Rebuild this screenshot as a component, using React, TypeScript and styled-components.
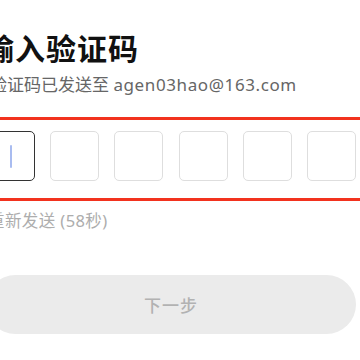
import styled, { createGlobalStyle } from "styled-components";

const GlobalStyle = createGlobalStyle`
  html, body {
    margin: 0;
    padding: 0;
    background: #ffffff;
    overflow: hidden;
  }
  body {
    width: 360px;
    height: 360px;
    font-family: "Noto Sans", "Noto Sans CJK SC", sans-serif;
  }
`;

const Page = styled.div`
  width: 370px;
  margin-left: -14px;
  padding-top: 26px;
  display: flex;
  flex-direction: column;
`;

const Title = styled.h1`
  margin: 0 0 0 -2px;
  font-family: "Noto Sans CJK SC", sans-serif;
  font-size: 30px;
  line-height: 42px;
  font-weight: 700;
  letter-spacing: 1px;
  color: #111111;
`;

const Subtitle = styled.p`
  margin: 5px 0 0 4px;
  font-size: 17px;
  line-height: 24px;
  color: #666666;
`;

const Email = styled.span`
  letter-spacing: 0.6px;
`;

const Highlight = styled.div`
  margin: 20px -20px 0;
  padding: 11px 20px 17px;
  border-top: 3px solid #f2321e;
  border-bottom: 3px solid #f2321e;
`;

const CodeRow = styled.div`
  display: flex;
  justify-content: space-between;
`;

const CodeBox = styled.div<{ $active?: boolean }>`
  box-sizing: border-box;
  width: 49px;
  height: 50px;
  border-radius: 5px;
  border: ${(p) => (p.$active ? "1.5px solid #333333" : "1px solid #dedede")};
  display: flex;
  align-items: center;
  justify-content: center;
`;

const Caret = styled.span`
  width: 2px;
  height: 23px;
  background: #a9bcf0;
  border-radius: 1px;
`;

const Resend = styled.div`
  margin: 9px 0 0 2px;
  font-size: 16.5px;
  line-height: 22px;
  letter-spacing: 0.4px;
  color: #adadad;
`;

const NextButton = styled.button`
  margin-top: 43px;
  height: 59px;
  width: 100%;
  border: none;
  border-radius: 30px;
  background: #ebebeb;
  color: #b2b2b2;
  font-family: "Noto Sans CJK SC", sans-serif;
  font-size: 17px;
  font-weight: 500;
  letter-spacing: 1px;
`;

export default function App() {
  const cells = [0, 1, 2, 3, 4, 5];
  return (
    <>
      <GlobalStyle />
      <Page>
        <Title>输入验证码</Title>
        <Subtitle>
          验证码已发送至 <Email>agen03hao@163.com</Email>
        </Subtitle>
        <Highlight>
          <CodeRow>
            {cells.map((i) => (
              <CodeBox key={i} $active={i === 0}>
                {i === 0 && <Caret />}
              </CodeBox>
            ))}
          </CodeRow>
        </Highlight>
        <Resend>重新发送 (58秒)</Resend>
        <NextButton>下一步</NextButton>
      </Page>
    </>
  );
}
